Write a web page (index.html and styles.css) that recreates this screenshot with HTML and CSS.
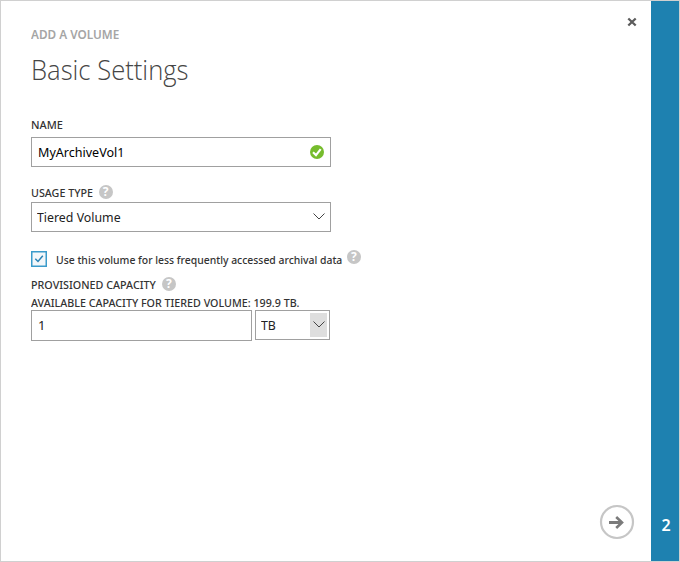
FILE: index.html
```html
<!DOCTYPE html>
<html lang="en">
<head>
<meta charset="utf-8">
<title>Add a volume</title>
<link rel="stylesheet" href="styles.css">
</head>
<body>
<div class="dialog">
  <main class="content">
    <div class="kicker"><span>ADD A VOLUME</span></div>
    <h1 class="title"><span>Basic Settings</span></h1>

    <div class="label label-name"><span>NAME</span></div>
    <div class="field name-field">
      <span class="t-vol">MyArchiveVol1</span>
      <svg class="valid" width="14" height="14" viewBox="0 0 14 14"><circle cx="7" cy="7" r="7" fill="#76bc2d"/><path d="M3 7.2L6 10.1L10.7 4.2" fill="none" stroke="#fff" stroke-width="2.1"/></svg>
    </div>

    <div class="label label-usage"><span class="t-usage">USAGE TYPE</span><span class="help">?</span></div>
    <div class="field usage-field">
      <span class="t-tiered">Tiered Volume</span>
      <svg class="chevron" width="12" height="7" viewBox="0 0 12 7"><path d="M.5 .5L6 6L11.5 .5" fill="none" stroke="#444" stroke-width="1"/></svg>
    </div>

    <div class="check-row">
      <svg class="checkbox" width="16" height="16" viewBox="0 0 16 16"><rect x=".75" y=".75" width="14.5" height="14.5" fill="#f3f7fa" stroke="#3b9bcb" stroke-width="1.5"/><path d="M4.3 7.7L7 10.5L11.8 4.8" fill="none" stroke="#2b83b5" stroke-width="1.5"/></svg>
      <span class="t-archive">Use this volume for less frequently accessed archival data</span>
      <span class="help">?</span>
    </div>

    <div class="label label-capacity"><span class="t-prov">PROVISIONED CAPACITY</span><span class="help">?</span></div>
    <div class="label label-available"><span class="t-avail">AVAILABLE CAPACITY FOR TIERED VOLUME: 199.9 TB.</span></div>
    <div class="capacity-row">
      <div class="field amount"><span>1</span></div>
      <div class="field unit"><span class="t-tb">TB</span>
        <span class="drop"><svg width="12" height="7" viewBox="0 0 12 7"><path d="M.5 .5L6 6L11.5 .5" fill="none" stroke="#444" stroke-width="1"/></svg></span>
      </div>
    </div>
  </main>
  <div class="controls">
    <svg class="close" width="10" height="10" viewBox="0 0 10 10"><path d="M1.3 1.5L8.7 8.5M8.7 1.5L1.3 8.5" stroke="#5c5c5c" stroke-width="2.3"/></svg>
    <svg class="next" width="36" height="36" viewBox="0 0 36 36"><circle cx="18" cy="18" r="16" fill="#fff" stroke="#c6c6c6" stroke-width="2.2"/><path d="M10 18.5H22" stroke="#7b7b7b" stroke-width="3"/><path d="M17.2 13L23 18.5L17.2 24" fill="none" stroke="#7b7b7b" stroke-width="2.6"/></svg>
  </div>
  <aside class="steps"><span>2</span></aside>
</div>
</body>
</html>
```

FILE: styles.css
```css
* { box-sizing: border-box; }
body { margin: 0; background: #fff; font-family: "Noto Sans", "Open Sans", sans-serif; color: #333; }
.dialog { display: flex; width: 680px; height: 562px; border: 1px solid #d0d0d0; background: #fff; }
.content { width: 565px; padding: 26px 0 0 30px; white-space: nowrap; }
.kicker { height: 16px; font-size: 12px; line-height: 16px; font-weight: 600; color: #a5a5a5; }
.kicker span, .title span, .label span:first-child, .field > span:first-child, .t-archive { display: inline-block; transform-origin: 0 50%; }
.kicker span { transform: scaleX(.98); }
.title { margin: 6px 0 0; height: 40px; font-family: "Open Sans", sans-serif; font-size: 28px; line-height: 40px; font-weight: 300; color: #454545; }
.title span { transform: scaleX(.915); }
.label { display: flex; align-items: center; height: 16px; font-size: 11px; line-height: 16px; font-weight: 500; }
.label-name { margin-top: 28px; }
.field { display: flex; align-items: center; border: 1px solid #a0a0a0; background: #fff; font-size: 13px; color: #222; }
.name-field { width: 300px; height: 30px; margin-top: 4px; padding: 0 6px; color: #000; }
.t-vol { transform: scaleX(.965); }
.valid { margin-left: auto; }
.label-usage { margin-top: 18px; }
.t-usage { transform: scaleX(.975); }
.usage-field { width: 300px; height: 30px; margin-top: 1px; padding: 0 5px; }
.t-tiered { transform: scaleX(.95); }
.chevron { margin-left: auto; margin-top: -2px; }
.help { flex: none; width: 14px; height: 14px; margin-left: 5px; border-radius: 50%; background: #c6c6c6; color: #fff; font-size: 12px; line-height: 14px; font-weight: 700; text-align: center; }
.label .help { margin-top: -2px; }
.label-usage .help { margin-left: 4px; }
.label-capacity .help { margin-left: 3px; }
.check-row { display: flex; align-items: center; height: 18px; margin-top: 18px; font-size: 11px; font-weight: 500; }
.t-archive { margin-left: 9px; transform: scaleX(.945); }
.check-row .help { margin: -4px 0 0 -12px; }
.label-capacity { margin-top: 9px; }
.t-prov { transform: scaleX(.977); }
.label-available { margin-top: 2px; margin-bottom: -1px; }
.t-avail { transform: scaleX(.973); }
.capacity-row { display: flex; gap: 3px; }
.amount { width: 221px; height: 31px; padding: 0 0 1px 6px; }
.unit { width: 75px; height: 30px; padding: 0 2px 0 5px; }
.t-tb { transform: scaleX(.95); }
.drop { display: flex; align-items: center; justify-content: center; width: 17px; height: 24px; margin-left: auto; background: #dedede; }
.drop svg { margin-top: -2px; }
.controls { display: flex; flex-direction: column; align-items: flex-start; justify-content: space-between; width: 85px; padding: 16px 0 21px; }
.close { margin-left: 61px; }
.next { margin-left: 33px; }
.steps { display: flex; align-items: flex-end; justify-content: center; width: 28px; padding: 0 0 25px 2px; background: #1e81b0; color: #fff; font-size: 16px; line-height: 22px; font-weight: 600; }
```
